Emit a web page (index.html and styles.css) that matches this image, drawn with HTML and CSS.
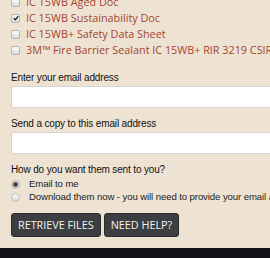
FILE: index.html
```html
<!DOCTYPE html>
<html lang="en">
<head>
<meta charset="utf-8">
<title>Retrieve files</title>
<link rel="stylesheet" href="styles.css">
</head>
<body>
<div class="page">
  <ul class="files">
    <li class="file"><span class="cb"></span><span class="file-name">IC 15WB Aged Doc</span></li>
    <li class="file"><span class="cb cb-on"><svg viewBox="0 0 10 10" width="10" height="10"><path d="M2.3 5.2 L4.2 7.2 L7.9 2.6" fill="none" stroke="#222" stroke-width="1.7"/></svg></span><span class="file-name">IC 15WB Sustainability Doc</span></li>
    <li class="file"><span class="cb"></span><span class="file-name">IC 15WB+ Safety Data Sheet</span></li>
    <li class="file"><span class="cb"></span><span class="file-name">3M™ Fire Barrier Sealant IC 15WB+ RIR 3219 CSIRO Report</span></li>
  </ul>

  <div class="field">
    <label class="label" for="email">Enter your email address</label>
    <input class="input" id="email" type="text">
  </div>
  <div class="field field-2">
    <label class="label" for="copy">Send a copy to this email address</label>
    <input class="input" id="copy" type="text">
  </div>

  <div class="question">How do you want them sent to you?</div>
  <ul class="radios">
    <li class="radio-row"><span class="radio radio-on"></span><span class="radio-text">Email to me</span></li>
    <li class="radio-row"><span class="radio"></span><span class="radio-text">Download them now - you will need to provide your email address to download</span></li>
  </ul>

  <div class="actions">
    <button class="btn" type="button">Retrieve files</button>
    <button class="btn" type="button">Need help?</button>
  </div>
</div>
<div class="footer"></div>
</body>
</html>
```

FILE: styles.css
```css
html, body {
  margin: 0;
  padding: 0;
}
body {
  background: #eee3d3;
  overflow: hidden;
  width: 270px;
  height: 258px;
}
.page {
  padding-left: 11px;
  margin-top: -6px;
  padding-top: 0;
}
.files, .radios {
  list-style: none;
  margin: 0;
  padding: 0;
}
.file {
  display: flex;
  align-items: center;
  height: 16px;
  white-space: nowrap;
}
.cb {
  flex: none;
  box-sizing: border-box;
  width: 9px;
  height: 9px;
  border: 1px solid #b9b6b1;
  border-radius: 2px;
  background: linear-gradient(#fbfbfb, #dcdcdc);
  display: flex;
  align-items: center;
  justify-content: center;
}
.cb svg {
  flex: none;
  width: 8px;
  height: 8px;
}
.file-name {
  margin-left: 6px;
  font-family: "Open Sans", sans-serif;
  font-size: 10.8px;
  line-height: 16px;
  color: #a4442f;
}
.field {
  margin-top: 14px;
}
.field-2 {
  margin-top: 10px;
}
.label, .question {
  display: block;
  font-family: "Liberation Sans", Arial, sans-serif;
  font-size: 10px;
  letter-spacing: -0.15px;
  line-height: 12px;
  color: #111;
  white-space: nowrap;
}
.input {
  display: block;
  box-sizing: border-box;
  margin: 2px 0 0 0;
  width: 300px;
  height: 22px;
  border: 1px solid #d8d4ce;
  border-radius: 3px;
  background: #fff;
  padding: 0 6px;
}
.question {
  margin-top: 10px;
}
.radios {
  margin-top: 1px;
}
.radio-row {
  display: flex;
  align-items: center;
  height: 13px;
  white-space: nowrap;
}
.radio {
  flex: none;
  box-sizing: border-box;
  width: 9px;
  height: 9px;
  border-radius: 50%;
  border: 1px solid #c4c1bc;
  background: linear-gradient(#fafafa, #d6d6d6);
  margin-top: 1px;
}
.radio-on {
  background: radial-gradient(circle, #3a3a3a 0 1.8px, #8a8a8a 2.2px, #d0d0d0 3px, #e6e6e6 4.5px);
  border-color: #b5b2ad;
}
.radio-text {
  margin-left: 9px;
  font-family: "Liberation Sans", Arial, sans-serif;
  font-size: 9.6px;
  letter-spacing: -0.1px;
  line-height: 13px;
  color: #222;
}
.actions {
  display: flex;
  gap: 3px;
  margin-top: 10px;
}
.btn {
  box-sizing: border-box;
  height: 24px;
  padding: 0 6px;
  margin: 0;
  border: 1px solid #2b2c2f;
  border-radius: 3px;
  background: #3d3e42;
  color: #f2f2f2;
  font-family: "Open Sans", sans-serif;
  font-size: 10.8px;
  text-transform: uppercase;
  line-height: 22px;
  white-space: nowrap;
}
.footer {
  margin-top: 11px;
  height: 20px;
  background: #121318;
}
```
